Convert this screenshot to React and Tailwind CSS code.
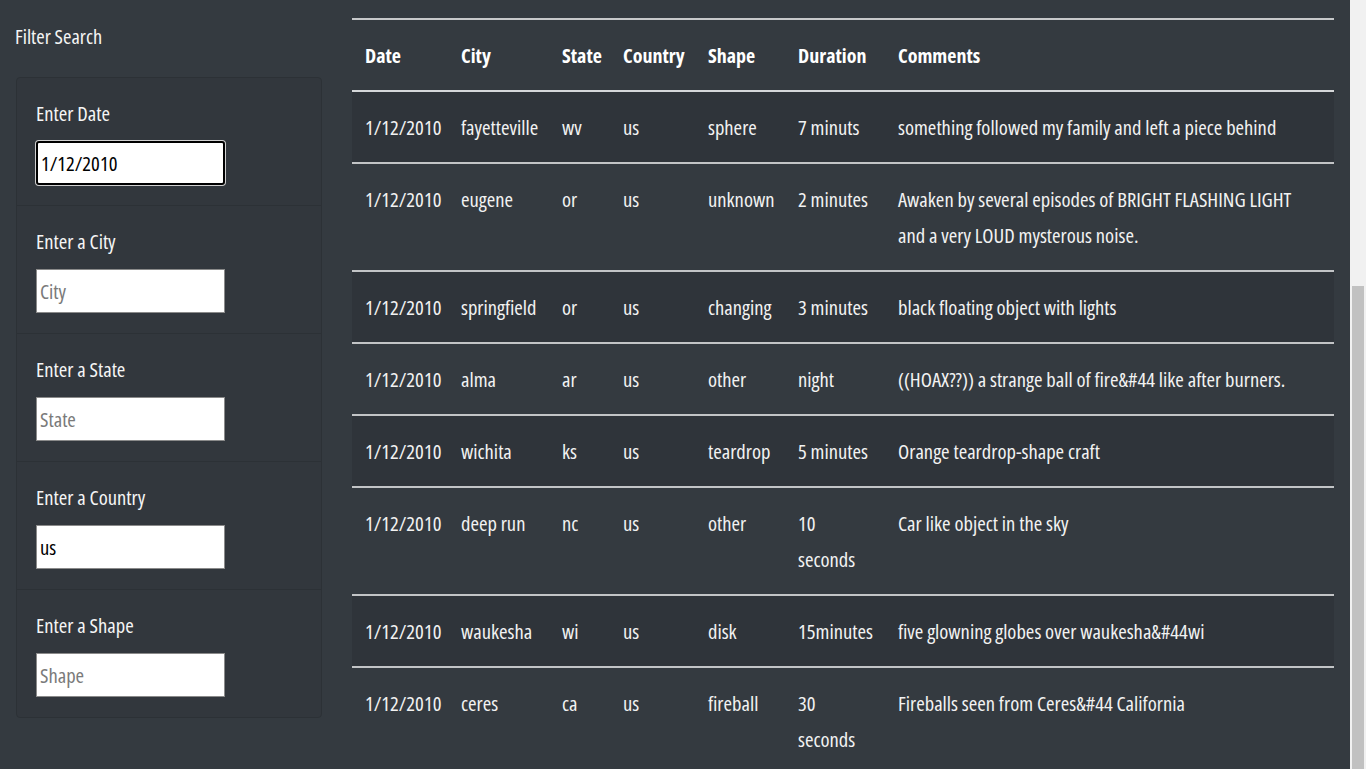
import React from "react";

const rows = [
  ["1/12/2010", "fayetteville", "wv", "us", "sphere", "7 minuts", "something followed my family and left a piece behind"],
  ["1/12/2010", "eugene", "or", "us", "unknown", "2 minutes", "Awaken by several episodes of BRIGHT FLASHING LIGHT and a very LOUD mysterous noise."],
  ["1/12/2010", "springfield", "or", "us", "changing", "3 minutes", "black floating object with lights"],
  ["1/12/2010", "alma", "ar", "us", "other", "night", "((HOAX??)) a strange ball of fire&#44 like after burners."],
  ["1/12/2010", "wichita", "ks", "us", "teardrop", "5 minutes", "Orange teardrop-shape craft"],
  ["1/12/2010", "deep run", "nc", "us", "other", "10 seconds", "Car like object in the sky"],
  ["1/12/2010", "waukesha", "wi", "us", "disk", "15minutes", "five glowning globes over waukesha&#44wi"],
  ["1/12/2010", "ceres", "ca", "us", "fireball", "30 seconds", "Fireballs seen from Ceres&#44 California"],
];

const filters = [
  { label: "Enter Date", placeholder: "", value: "1/12/2010", focused: true },
  { label: "Enter a City", placeholder: "City", value: "" },
  { label: "Enter a State", placeholder: "State", value: "" },
  { label: "Enter a Country", placeholder: "Country", value: "us" },
  { label: "Enter a Shape", placeholder: "Shape", value: "" },
];

const headers = ["Date", "City", "State", "Country", "Shape", "Duration", "Comments"];
const widths = ["w-[96px]", "w-[101px]", "w-[61px]", "w-[85px]", "w-[90px]", "w-[100px]", "w-auto"];

export default function App() {
  return (
    <div className="flex h-[769px] w-[1366px] overflow-hidden bg-[#343a40] font-['Open_Sans',sans-serif] font-stretch-condensed text-white">
      <div className="flex flex-1">
        {/* sidebar */}
        <aside className="w-[336px] shrink-0 pl-[15px] pt-[21px]">
          <h2 className="text-[20.4px] leading-[30px] text-[#f5f5f5]">Filter Search</h2>
          <div className="mt-[26px] ml-px w-[306px] rounded-[4px] border border-[#2c3136] bg-[#32373d]">
            {filters.map((f, i) => (
              <div
                key={f.label}
                className={`px-[19px] pt-[19px] pb-[20px] ${i > 0 ? "border-t border-[#2c3136]" : ""}`}
              >
                <div className="text-[20.6px] leading-[32px] text-[#f5f5f5]">{f.label}</div>
                <input
                  readOnly
                  defaultValue={f.value}
                  placeholder={f.placeholder}
                  className={`mt-[12px] h-[44px] w-[189px] bg-white px-[3px] text-[20.6px] text-black placeholder:text-[#7a7a7a] outline-none ${
                    f.focused ? "rounded-[3px] border-2 border-black shadow-[0_0_0_1px_#d0d0d0]" : "border border-[#8a8a8a]"
                  }`}
                />
              </div>
            ))}
          </div>
        </aside>

        {/* table */}
        <main className="flex-1 pl-[16px] pr-[16px] pt-[18px]">
          <table className="w-full table-fixed border-collapse text-[20.6px]">
            <thead>
              <tr className="border-t-2 border-[#c6c8ca]">
                {headers.map((h, i) => (
                  <th
                    key={h}
                    className={`${widths[i]} px-[13px] pt-[19px] pb-[18px] text-left align-top text-[20px] font-bold leading-[33px]`}
                  >
                    {h}
                  </th>
                ))}
              </tr>
            </thead>
            <tbody>
              {rows.map((r, ri) => (
                <tr
                  key={ri}
                  className={`border-t-2 ${ri === 0 ? "border-[#d5d7d9]" : "border-[#c2c4c6]"} ${
                    ri % 2 === 0 ? "bg-[#2f343a]" : ""
                  }`}
                >
                  {r.map((c, ci) => (
                    <td key={ci} className="px-[13px] pt-[17px] pb-[17px] align-top leading-[36px] text-[#f2f2f2]">
                      {c}
                    </td>
                  ))}
                </tr>
              ))}
            </tbody>
          </table>
        </main>
      </div>

      {/* scrollbar */}
      <div className="flex w-[16px] shrink-0 flex-col bg-[#f1f1f1] pl-[2px] pr-[2px]">
        <div className="h-[286px]" />
        <div className="flex-1 bg-[#c1c1c1]" />
      </div>
    </div>
  );
}
